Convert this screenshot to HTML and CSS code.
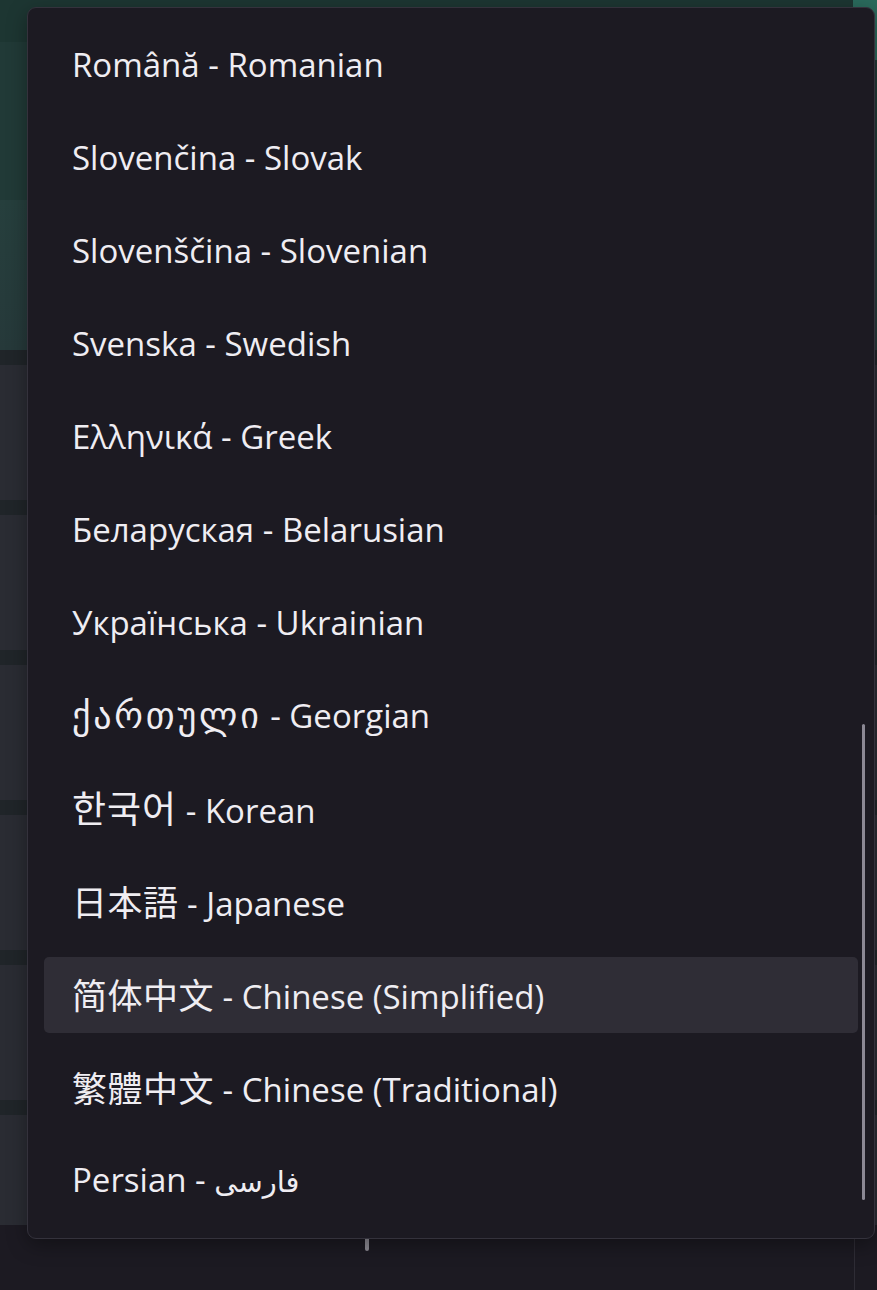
FILE: index.html
```html
<!DOCTYPE html>
<html lang="en">
<head>
<meta charset="utf-8">
<title>Language menu</title>
<link rel="stylesheet" href="styles.css">
</head>
<body>
<div class="backdrop">
  <div class="band b-top"></div>
  <div class="band b-teal1"></div>
  <div class="band b-teal2"></div>
  <div class="gap"></div>
  <div class="band b-gray"></div>
  <div class="gap"></div>
  <div class="band b-gray"></div>
  <div class="gap"></div>
  <div class="band b-gray"></div>
  <div class="gap"></div>
  <div class="band b-gray"></div>
  <div class="gap"></div>
  <div class="band b-gray"></div>
  <div class="gap"></div>
  <div class="band b-gray short"></div>
  <div class="b-bottom"></div>
</div>
<div class="corner-accent"></div>
<div class="edge-line"></div>
<div class="under-thumb"></div>

<div class="popup">
  <ul class="menu">
    <li class="item"><span class="label">Română - Romanian</span></li>
    <li class="item"><span class="label">Slovenčina - Slovak</span></li>
    <li class="item"><span class="label">Slovenščina - Slovenian</span></li>
    <li class="item"><span class="label">Svenska - Swedish</span></li>
    <li class="item"><span class="label">Ελληνικά - Greek</span></li>
    <li class="item"><span class="label">Беларуская - Belarusian</span></li>
    <li class="item"><span class="label">Українська - Ukrainian</span></li>
    <li class="item"><span class="label"><span class="ka">ქართული</span> - Georgian</span></li>
    <li class="item"><span class="label"><span class="kr">한국어</span> - Korean</span></li>
    <li class="item"><span class="label"><span class="jp">日本語</span> - Japanese</span></li>
    <li class="item selected"><span class="label"><span class="sc">简体中文</span> - Chinese (Simplified)</span></li>
    <li class="item"><span class="label"><span class="tc">繁體中文</span> - Chinese (Traditional)</span></li>
    <li class="item"><span class="label">Persian - <span class="fa" dir="rtl">فارسی</span></span></li>
  </ul>
  <div class="scrollbar"></div>
</div>
</body>
</html>
```

FILE: styles.css
```css
html, body {
  margin: 0;
  padding: 0;
}
body {
  width: 877px;
  height: 1290px;
  overflow: hidden;
  position: relative;
  background: #1c1a22;
  font-family: "Open Sans", "Noto Sans", "DejaVu Sans", sans-serif;
}

.backdrop {
  display: flex;
  flex-direction: column;
  width: 100%;
}
.band { width: 100%; }
.b-top { height: 42px; background: #1d3632; }
.b-teal1 { height: 158px; background: #213a37; }
.b-teal2 { height: 150px; background: linear-gradient(#263f3d, #26393a); }
.gap { height: 15px; background: #202529; }
.b-gray { height: 135px; background: #2a2c33; }
.short { height: 110px; }
.b-bottom { height: 100px; background: #1c1a22; }

.corner-accent {
  position: absolute;
  top: 0;
  right: 0;
  width: 24px;
  height: 60px;
  background: #2a6a5c;
  border-bottom-left-radius: 6px;
}
.edge-line {
  position: absolute;
  left: 854px;
  top: 1200px;
  width: 1px;
  height: 90px;
  background: #2e2c35;
}
.under-thumb {
  position: absolute;
  left: 365px;
  top: 1236px;
  width: 4px;
  height: 15px;
  border-radius: 2px;
  background: #8c8a93;
}

.popup {
  position: absolute;
  left: 27px;
  top: 7px;
  width: 846px;
  height: 1230px;
  border: 1px solid #34323c;
  border-radius: 9px;
  background: #1c1a22;
  box-shadow: 0 6px 20px rgba(0, 0, 0, 0.35);
  overflow: hidden;
}

.menu {
  list-style: none;
  margin: 0;
  padding: 19px 16px 0 16px;
  display: flex;
  flex-direction: column;
  gap: 17px;
}
.item {
  height: 76px;
  display: flex;
  align-items: center;
  padding-left: 28px;
  border-radius: 5px;
  color: #efedf2;
  font-size: 33px;
  white-space: nowrap;
}
.label {
  display: block;
  line-height: 40px;
}
.item.selected {
  background: #2f2d36;
}

.ka { font-family: "DejaVu Sans", sans-serif; font-size: 36px; letter-spacing: 2.8px; }
.kr { font-family: "Noto Sans CJK KR", sans-serif; font-size: 37px; letter-spacing: 1px; }
.jp { font-family: "Noto Sans CJK JP", sans-serif; font-size: 35px; letter-spacing: 0.5px; }
.sc { font-family: "Noto Sans CJK SC", sans-serif; font-size: 35px; letter-spacing: 0.5px; }
.tc { font-family: "Noto Sans CJK TC", sans-serif; font-size: 35px; letter-spacing: 0.5px; }
.fa { font-family: "DejaVu Sans", sans-serif; font-size: 29px; unicode-bidi: isolate; }

.scrollbar {
  position: absolute;
  left: 834px;
  top: 716px;
  width: 3px;
  height: 476px;
  border-radius: 2px;
  background: #8b8894;
}
```
